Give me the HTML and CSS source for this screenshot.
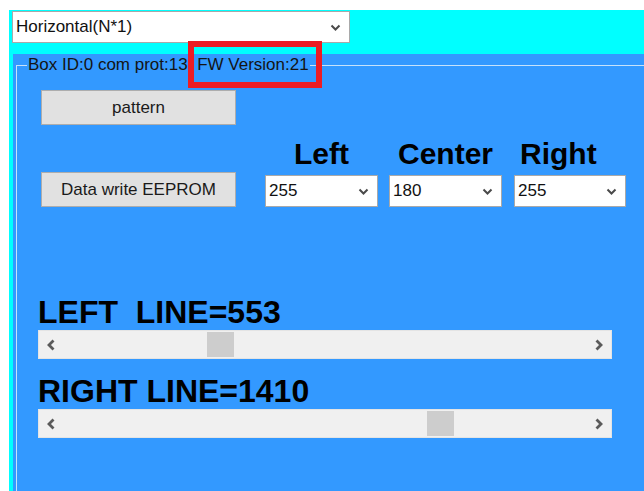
FILE: index.html
```html
<!DOCTYPE html>
<html lang="en">
<head>
<meta charset="utf-8">
<title>Line settings</title>
<link rel="stylesheet" href="styles.css">
</head>
<body>
<div class="window">
  <div class="combo mode-combo">
    <span class="combo-text">Horizontal(N*1)</span>
    <svg class="chev" width="11" height="7" viewBox="0 0 11 7"><path d="M1.5 1.5 L5.5 5.5 L9.5 1.5" fill="none" stroke="#4a4a4a" stroke-width="2"/></svg>
  </div>

  <div class="panel">
    <fieldset class="group">
      <legend>Box ID:0 com prot:13&nbsp; FW Version:21</legend>
      <div class="group-body">
        <button class="btn">pattern</button>

        <div class="levels">
          <div></div>
          <div class="head">Left</div>
          <div class="head">Center</div>
          <div class="head head-right">Right</div>

          <button class="btn">Data write EEPROM</button>
          <div class="combo level"><span class="combo-text">255</span><svg class="chev" width="11" height="7" viewBox="0 0 11 7"><path d="M1.5 1.5 L5.5 5.5 L9.5 1.5" fill="none" stroke="#4a4a4a" stroke-width="2"/></svg></div>
          <div class="combo level"><span class="combo-text">180</span><svg class="chev" width="11" height="7" viewBox="0 0 11 7"><path d="M1.5 1.5 L5.5 5.5 L9.5 1.5" fill="none" stroke="#4a4a4a" stroke-width="2"/></svg></div>
          <div class="combo level"><span class="combo-text">255</span><svg class="chev" width="11" height="7" viewBox="0 0 11 7"><path d="M1.5 1.5 L5.5 5.5 L9.5 1.5" fill="none" stroke="#4a4a4a" stroke-width="2"/></svg></div>
        </div>

        <div class="lines">
          <div class="line-label">LEFT&nbsp; LINE=553</div>
          <div class="hscroll">
            <div class="arrow"><svg width="10" height="12" viewBox="0 0 10 12"><path d="M7.5 1.5 L3 6 L7.5 10.5" fill="none" stroke="#5a5a5a" stroke-width="2.8"/></svg></div>
            <div class="track"><div class="thumb" style="margin-left:144px"></div></div>
            <div class="arrow"><svg width="10" height="12" viewBox="0 0 10 12"><path d="M2.5 1.5 L7 6 L2.5 10.5" fill="none" stroke="#5a5a5a" stroke-width="2.8"/></svg></div>
          </div>

          <div class="line-label second">RIGHT LINE=1410</div>
          <div class="hscroll">
            <div class="arrow"><svg width="10" height="12" viewBox="0 0 10 12"><path d="M7.5 1.5 L3 6 L7.5 10.5" fill="none" stroke="#5a5a5a" stroke-width="2.8"/></svg></div>
            <div class="track"><div class="thumb" style="margin-left:364px"></div></div>
            <div class="arrow"><svg width="10" height="12" viewBox="0 0 10 12"><path d="M2.5 1.5 L7 6 L2.5 10.5" fill="none" stroke="#5a5a5a" stroke-width="2.8"/></svg></div>
          </div>
        </div>
      </div>
    </fieldset>
  </div>

  <div class="highlight"></div>
</div>
</body>
</html>
```

FILE: styles.css
```css
* { box-sizing: border-box; }

html, body {
  margin: 0;
  height: 100%;
  overflow: hidden;
  background: #ffffff;
}

body {
  padding: 10px 0 0 9px;
  font-family: "Liberation Sans", Arial, sans-serif;
  color: #000;
}

.window {
  position: relative;
  height: 100%;
  background: #00ffff;
  display: flex;
  flex-direction: column;
  padding-top: 1px;
}

/* drop-down boxes */
.combo {
  display: flex;
  align-items: center;
  justify-content: space-between;
  background: #ffffff;
  border: 1px solid #a9a9a9;
  font-size: 17px;
  color: #111;
}

.combo-text { padding-left: 3px; }
.chev { margin-right: 8px; flex: none; }

.mode-combo {
  margin-left: 3px;
  width: 338px;
  height: 32px;
  flex: none;
}

/* blue work area */
.panel {
  flex: 1;
  margin: 11px 0 0 4px;
  background: #3399ff;
  overflow: hidden;
}

.group {
  margin: 2px 0 0 3px;
  padding: 0;
  width: 720px;
  height: 600px;
  border: 1px solid rgba(225, 238, 250, 0.85);
}

.group legend {
  margin-left: 10px;
  padding: 0 1px;
  font-size: 17px;
  line-height: 18px;
  color: #141414;
  white-space: nowrap;
}

.group-body {
  padding: 16px 0 0 24px;
}

.btn {
  display: block;
  width: 195px;
  height: 35px;
  margin: 0;
  padding: 0;
  background: #e1e1e1;
  border: 1px solid #adadad;
  font-family: "Liberation Sans", Arial, sans-serif;
  font-size: 17px;
  color: #1a1a1a;
}

/* level selectors */
.levels {
  display: grid;
  grid-template-columns: 213px 113px 113px 113px;
  column-gap: 11px;
  row-gap: 1px;
  align-items: end;
  margin-top: 12px;
}

.head {
  font-size: 30px;
  font-weight: bold;
  line-height: 34px;
  text-align: center;
  white-space: nowrap;
}

.head-right {
  text-align: left;
  padding-left: 6px;
  margin-left: 1px;
}

.level {
  height: 32px;
}

.levels .level:last-child { margin-left: 1px; }

/* line position sliders */
.lines {
  margin: 87px 0 0 -3px;
}

.line-label {
  font-size: 32px;
  font-weight: bold;
  line-height: 36px;
  white-space: nowrap;
}

.line-label.second { margin-top: 14px; }

.hscroll {
  display: flex;
  width: 574px;
  height: 29px;
  background: #f0f0f0;
  border: 1px solid #e4e4e4;
}

.arrow {
  flex: none;
  width: 24px;
  display: flex;
  align-items: center;
  justify-content: center;
}

.track {
  flex: 1;
  display: flex;
  align-items: center;
}

.thumb {
  width: 27px;
  height: 25px;
  background: #cdcdcd;
}

/* annotation frame around the firmware version */
.highlight {
  position: absolute;
  left: 179px;
  top: 31px;
  width: 134px;
  height: 47px;
  border: 6px solid #ec1c24;
}
```
